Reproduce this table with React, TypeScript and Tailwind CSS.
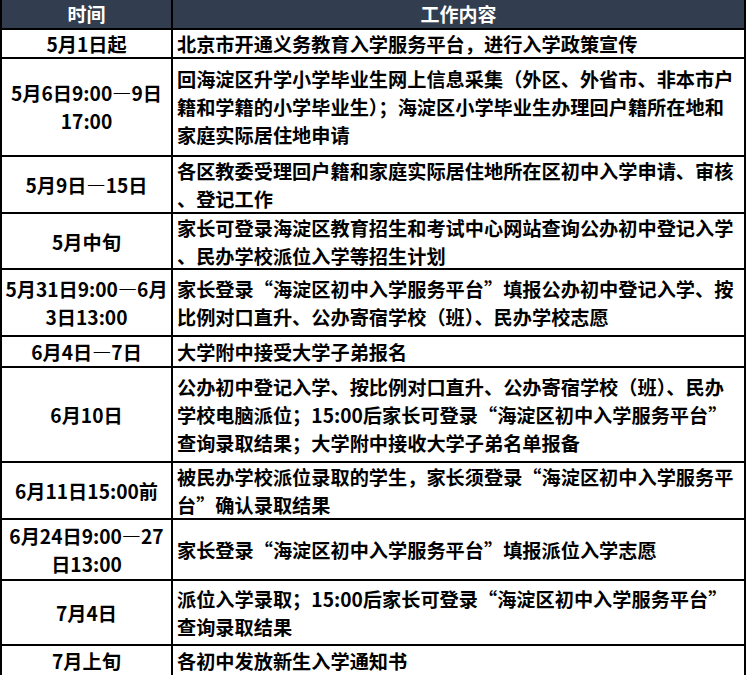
import React from "react";

type Row = { time: string[]; work: string[]; h: number };

const rows: Row[] = [
  { time: ["5月1日起"], work: ["北京市开通义务教育入学服务平台，进行入学政策宣传"], h: 29 },
  {
    time: ["5月6日9:00—9日", "17:00"],
    work: [
      "回海淀区升学小学毕业生网上信息采集（外区、外省市、非本市户",
      "籍和学籍的小学毕业生）；海淀区小学毕业生办理回户籍所在地和",
      "家庭实际居住地申请",
    ],
    h: 98,
  },
  {
    time: ["5月9日—15日"],
    work: ["各区教委受理回户籍和家庭实际居住地所在区初中入学申请、审核", "、登记工作"],
    h: 57,
  },
  {
    time: ["5月中旬"],
    work: ["家长可登录海淀区教育招生和考试中心网站查询公办初中登记入学", "、民办学校派位入学等招生计划"],
    h: 56,
  },
  {
    time: ["5月31日9:00—6月", "3日13:00"],
    work: ["家长登录“海淀区初中入学服务平台”填报公办初中登记入学、按", "比例对口直升、公办寄宿学校（班）、民办学校志愿"],
    h: 67,
  },
  { time: ["6月4日—7日"], work: ["大学附中接受大学子弟报名"], h: 31 },
  {
    time: ["6月10日"],
    work: [
      "公办初中登记入学、按比例对口直升、公办寄宿学校（班）、民办",
      "学校电脑派位；15:00后家长可登录“海淀区初中入学服务平台”",
      "查询录取结果；大学附中接收大学子弟名单报备",
    ],
    h: 95,
  },
  {
    time: ["6月11日15:00前"],
    work: ["被民办学校派位录取的学生，家长须登录“海淀区初中入学服务平", "台”确认录取结果"],
    h: 57,
  },
  {
    time: ["6月24日9:00—27", "日13:00"],
    work: ["家长登录“海淀区初中入学服务平台”填报派位入学志愿"],
    h: 61,
  },
  {
    time: ["7月4日"],
    work: ["派位入学录取；15:00后家长可登录“海淀区初中入学服务平台”", "查询录取结果"],
    h: 65,
  },
  { time: ["7月上旬"], work: ["各初中发放新生入学通知书"], h: 31 },
];

export default function App() {
  return (
    <div
      lang="zh-CN"
      className="w-[746px] h-[675px] bg-white text-black font-bold text-[19.2px] leading-[28px] overflow-hidden"
      style={{ fontFamily: '"Noto Sans CJK SC", "Noto Sans", sans-serif' }}
    >
      <div className="border-x-2 border-b-2 border-black">
        <div className="grid grid-cols-[171px_1fr] h-[28px] bg-[#323e4f] text-white text-[19px]">
          <div className="flex items-center justify-center border-r-2 border-black">时间</div>
          <div className="flex items-center justify-center">工作内容</div>
        </div>
        {rows.map((r, i) => (
          <div key={i} className="grid grid-cols-[171px_1fr] border-t-2 border-black" style={{ height: r.h }}>
            <div className="flex flex-col items-center justify-center border-r-2 border-black text-center whitespace-nowrap">
              {r.time.map((t, j) => (
                <div key={j}>{t}</div>
              ))}
            </div>
            <div className="flex flex-col justify-center pl-[4px] whitespace-nowrap">
              {r.work.map((t, j) => (
                <div key={j}>{t}</div>
              ))}
            </div>
          </div>
        ))}
      </div>
    </div>
  );
}
